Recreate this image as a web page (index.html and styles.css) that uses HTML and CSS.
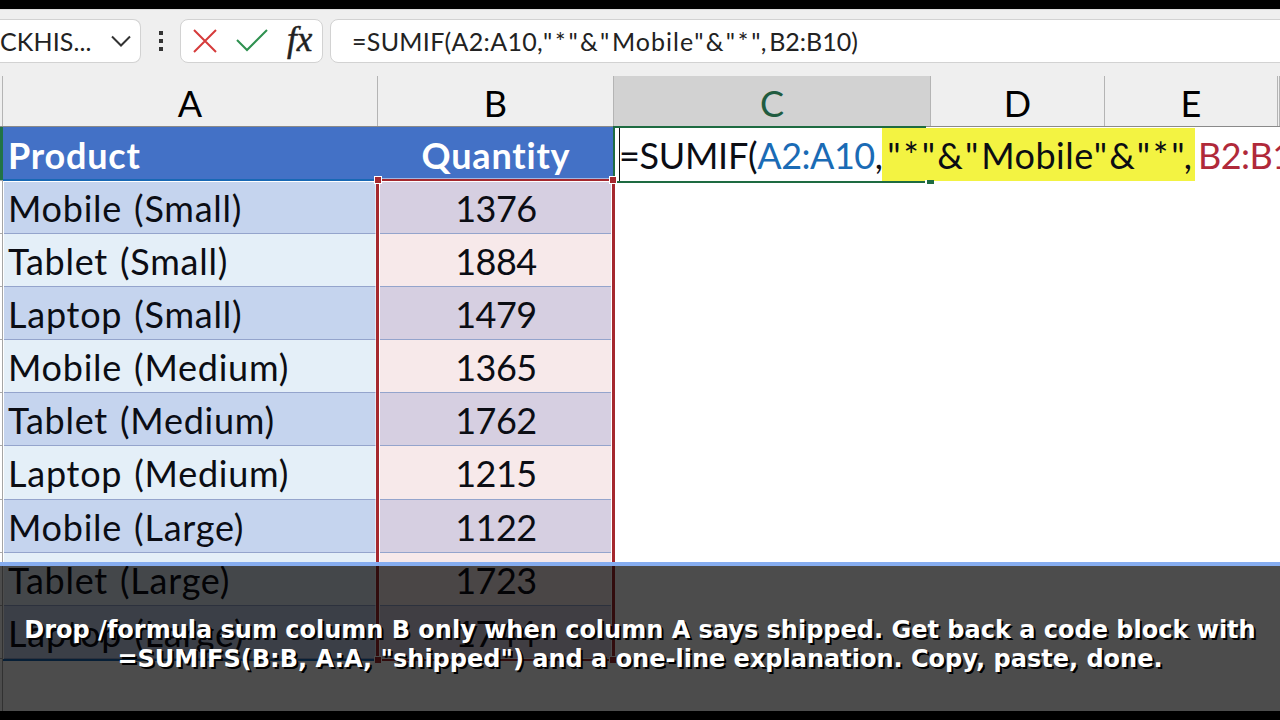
FILE: index.html
```
<!DOCTYPE html>
<html lang="en">
<head>
    <meta charset="UTF-8">
    <meta name="viewport" content="width=device-width, initial-scale=1.0">
    <title>SUMIF formula</title>
    <link rel="stylesheet" href="styles.css">
</head>
<body>
    <div class="screen">
        <div class="toolbar">
            <div class="name-box">
                <span class="name-text">CKHIS...</span>
                <svg class="chevron" width="20" height="12" viewBox="0 0 20 12"><path d="M1 1.5 L10 10.5 L19 1.5"/></svg>
            </div>
            <div class="dots"><i></i><i></i><i></i></div>
            <div class="actions">
                <svg width="136" height="42" viewBox="0 0 136 42">
                    <path class="cancel" d="M13 10 L35 32 M35 10 L13 32"/>
                    <path class="accept" d="M56 20 L66 30 L86 10"/>
                    <text class="fx" x="106" y="31">fx</text>
                </svg>
            </div>
            <div class="formula-bar"><span>=SUMIF(A2:A10,</span><span class="literal">"*"&amp;"<b>Mobile</b>"&amp;"*",</span><span class="tail">B2:B10)</span></div>
        </div>

        <div class="columns">
            <div></div>
            <div>A</div>
            <div>B</div>
            <div class="active">C</div>
            <div>D</div>
            <div>E</div>
            <div></div>
        </div>

        <div class="sheet">
            <div class="gutter"><i class="head"></i><i></i><i></i><i></i><i></i><i></i><i></i><i></i><i></i><i></i></div>
            <div class="col products">
                <div class="head">Product</div>
                <div>Mobile (Small)</div>
                <div>Tablet (Small)</div>
                <div>Laptop (Small)</div>
                <div>Mobile (Medium)</div>
                <div>Tablet (Medium)</div>
                <div>Laptop (Medium)</div>
                <div>Mobile (Large)</div>
                <div>Tablet (Large)</div>
                <div>Laptop (Large)</div>
                <div class="range range-a"></div>
            </div>
            <div class="col quantities">
                <div class="head">Quantity</div>
                <div>1376</div>
                <div>1884</div>
                <div>1479</div>
                <div>1365</div>
                <div>1762</div>
                <div>1215</div>
                <div>1122</div>
                <div>1723</div>
                <div>1744</div>
                <div class="range range-b"><i></i><i></i><i></i><i></i></div>
            </div>
            <div class="editor">
                <div class="cell-border"></div>
                <div class="formula"><span>=SUMIF(</span><span class="ref-a">A2:A10</span><span>,</span><span class="mark">"*"&amp;"<b>Mobile</b>"&amp;"*",</span><span class="ref-b">B2:B10</span></div>
                <div class="handle"></div>
            </div>
        </div>

        <div class="caption">
            <p>Drop /formula sum column B only when column A says shipped. Get back a code block with<br>=SUMIFS(B:B, A:A, "shipped") and a one-line explanation. Copy, paste, done.</p>
        </div>
    </div>
</body>
</html>
```

FILE: styles.css
```
* {
    box-sizing: border-box;
}
body {
    margin: 0;
    background: #000;
    font-family: Lato, sans-serif;
}
.screen {
    position: relative;
    width: 1280px;
    height: 720px;
    border-top: 9px solid #000;
    border-bottom: 9px solid #000;
    background: #fff;
    overflow: hidden;
}

/* formula bar */
.toolbar {
    display: flex;
    height: 67px;
    padding-top: 9px;
    background: #efefef;
    border-top: 1px solid #dcdcdc;
}
.name-box, .actions, .formula-bar {
    height: 44px;
    background: #fff;
    border: 1px solid #d2d2d2;
    border-radius: 8px;
}
.name-box {
    display: flex;
    align-items: center;
    justify-content: space-between;
    width: 142px;
    margin-left: -1px;
    padding: 0 9px 0 1px;
    border-left: 0;
    border-top-left-radius: 0;
    border-bottom-left-radius: 0;
    font-size: 25px;
    color: #222;
}
.name-text {
    letter-spacing: 0.1px;
}
.chevron path {
    fill: none;
    stroke: #333;
    stroke-width: 2;
}
.dots {
    display: flex;
    flex-direction: column;
    align-items: center;
    justify-content: center;
    gap: 4px;
    width: 39px;
    height: 44px;
}
.dots i {
    width: 4px;
    height: 4px;
    background: #333;
}
.actions {
    width: 143px;
}
.actions path {
    fill: none;
    stroke-width: 2;
}
.actions .cancel {
    stroke: #d63b3b;
}
.actions .accept {
    stroke: #2f9150;
}
.fx {
    font: italic 35px "Liberation Serif", serif;
    fill: #222;
    stroke: #222;
    stroke-width: 0.5;
}
.formula-bar {
    flex: 1;
    margin: 0 -8px 0 7px;
    padding-left: 21px;
    font-size: 25px;
    line-height: 42px;
    letter-spacing: 0.3px;
    color: #222;
    white-space: nowrap;
}
.literal {
    letter-spacing: 2.8px;
}
.literal b {
    font-weight: normal;
    letter-spacing: 1px;
}
.tail {
    letter-spacing: 0;
}

/* column letters */
.columns, .sheet {
    display: grid;
    grid-template-columns: 3px 375px 236px 317px 174px 173px 2px;
}
.columns {
    height: 51px;
    background: #efefef;
    border-bottom: 1px solid #8a8a8a;
    font-size: 36px;
    line-height: 55px;
    text-align: center;
}
.columns div {
    height: 50px;
    border-right: 1px solid #b4b4b4;
}
.columns .active {
    background: #d2d2d2;
    color: #215c40;
}

/* cells */
.sheet {
    font-size: 36px;
    letter-spacing: -0.5px;
    white-space: nowrap;
    color: #0b0d14;
}
.col, .gutter {
    position: relative;
    display: grid;
    grid-template-rows: 54px repeat(9, 53.1px);
    height: 584px;
}
.gutter {
    border-right: 1px solid #a5a5a5;
}
.gutter i {
    border-bottom: 1px solid #aaa;
}
.gutter .head {
    margin-right: -1px;
    background: #217346;
}
.col > div:not(.range) {
    line-height: 54px;
    background: #c5d4ee;
    border-bottom: 1px solid #94a4cc;
}
.col > div:nth-child(odd):not(.range) {
    background: #e4eff8;
}
.products > div {
    padding-left: 5px;
    letter-spacing: 0.75px;
    word-spacing: 2px;
}
.quantities {
    text-align: center;
}
.quantities > div:not(.range) {
    background: #d6cfe1;
}
.quantities > div:nth-child(odd):not(.range) {
    background: #f7e9ea;
}
.col > .head.head:not(.range) {
    line-height: 56px;
    letter-spacing: 0.8px;
    background: #4371c6;
    border: 0;
    color: #fff;
    font-weight: bold;
}

/* coloured reference frames */
.range {
    position: absolute;
    top: 52px;
    bottom: 50px;
}
.range-a {
    left: 0;
    right: 0;
    border-top: 2px solid #1868b4;
    border-bottom: 2px solid #1868b4;
    box-shadow: inset 1px 1px 0 #fff;
}
.range-b {
    z-index: 2;
    left: -2px;
    right: -1px;
    border: 2px solid #a5282e;
    border-left-width: 3px;
    border-right-width: 3px;
    box-shadow: inset 0 0 0 1px #fff, 0 0 0 1px rgba(255, 255, 255, 0.5);
}
.range-b i {
    position: absolute;
    width: 8px;
    height: 8px;
    background: #a5282e;
    border: 1px solid #fff;
}
.range-b i:nth-child(1) { top: -5px; left: -5px; }
.range-b i:nth-child(2) { top: -5px; right: -5px; }
.range-b i:nth-child(3) { bottom: -5px; left: -5px; }
.range-b i:nth-child(4) { bottom: -5px; right: -5px; }

/* cell being edited */
.editor {
    position: relative;
    height: 54px;
    padding: 1px 0 0 5px;
}
.cell-border {
    position: absolute;
    top: -1px;
    left: -1px;
    width: 313px;
    height: 57px;
    border: 2px solid #1e6b41;
    border-right: 0;
}
.formula {
    position: relative;
    display: flex;
    width: max-content;
    height: 53px;
    line-height: 55px;
    border-left: 1px solid #111;
    background: #fff;
}
.formula span:first-child {
    margin-left: -1px;
    letter-spacing: -0.3px;
}
.handle {
    position: absolute;
    left: 311px;
    top: 53px;
    width: 9px;
    height: 4px;
    background: #1e6b41;
    border-left: 2px solid #fff;
}
.ref-a {
    color: #1a6bb5;
}
.ref-b {
    margin-left: 3px;
    color: #b0293a;
}
.mark {
    padding-left: 5px;
    letter-spacing: 2.9px;
    background: #f3f342;
}
.mark b {
    font-weight: normal;
    letter-spacing: 0.5px;
}

/* subtitle strip */
.caption {
    position: absolute;
    z-index: 3;
    left: 0;
    right: 0;
    top: 553px;
    bottom: 0;
    border-top: 4px solid #86adf0;
    background: rgba(0, 0, 0, 0.7);
    background-clip: padding-box;
}
.caption p {
    margin: 50px 0 0;
    font: bold 24px/29px "DejaVu Sans", sans-serif;
    color: #fff;
    text-align: center;
    text-shadow: 2px 2px 0 #000;
    white-space: nowrap;
}
```
